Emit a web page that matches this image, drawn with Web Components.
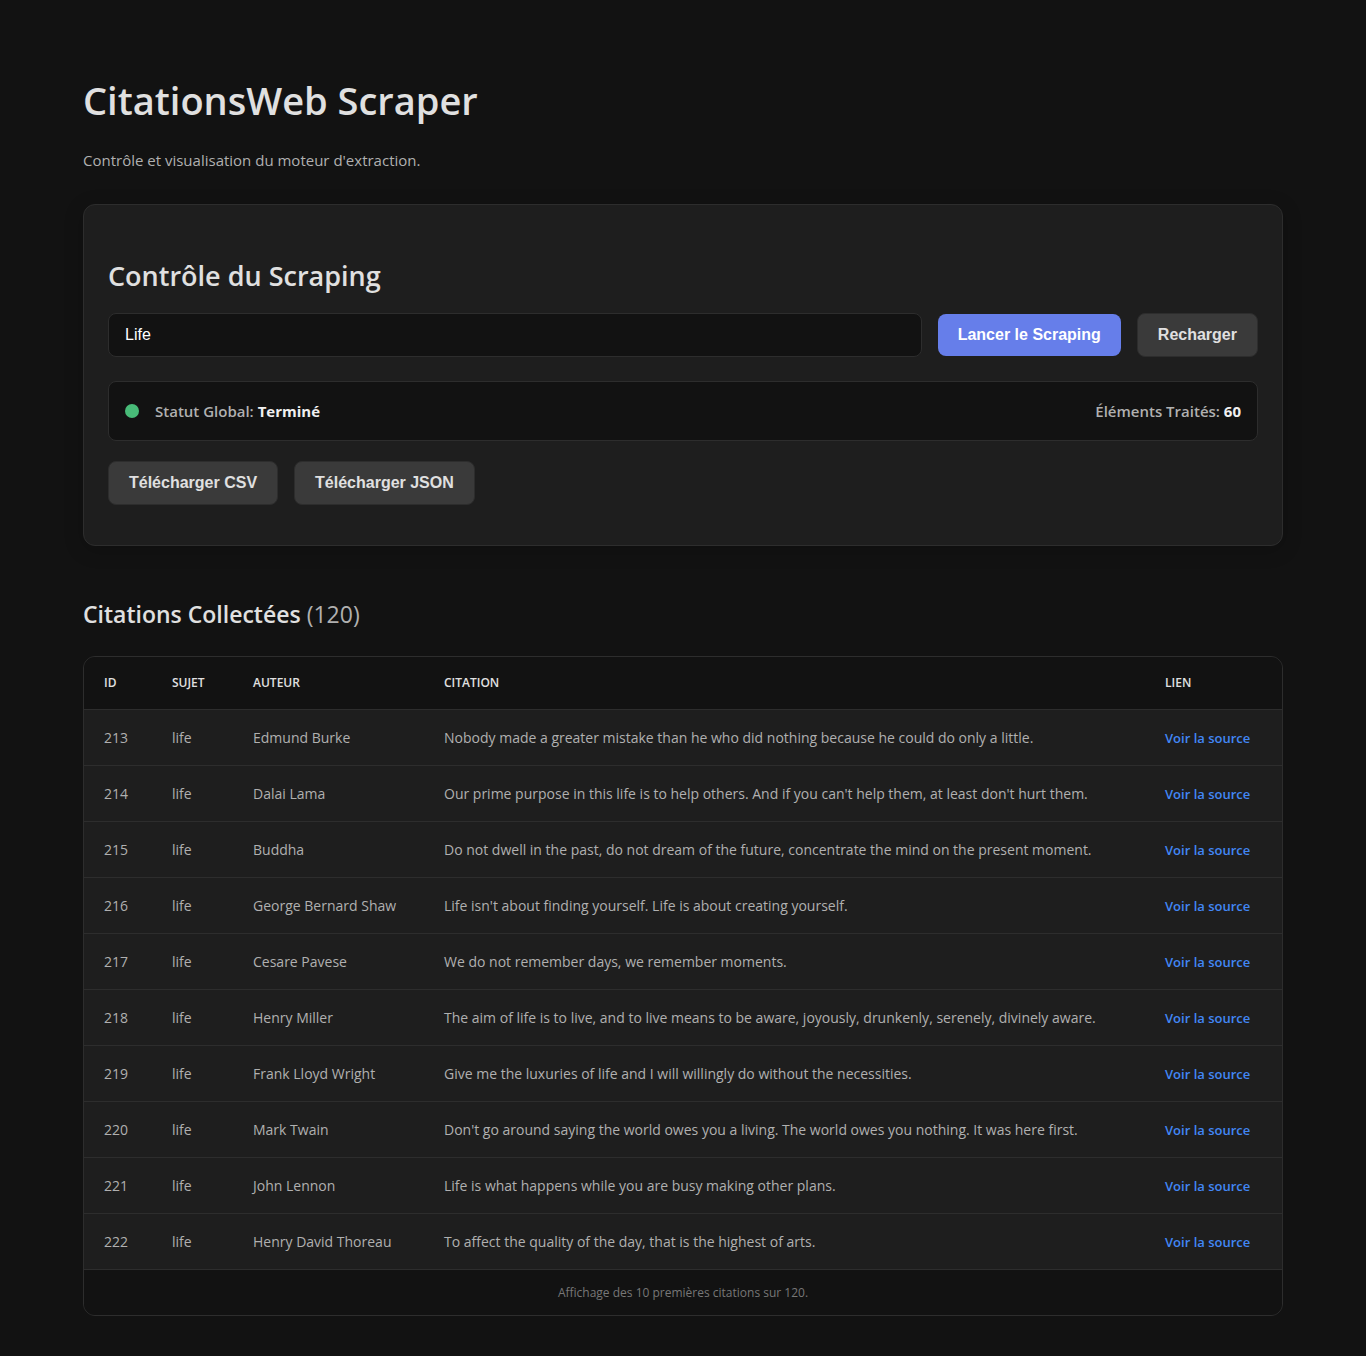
<!DOCTYPE html>
<html lang="fr">
<head>
<meta charset="utf-8">
<meta name="viewport" content="width=device-width, initial-scale=1">
<title>CitationsWeb Scraper</title>
<style>
  :root {
    --bg: #121212;
    --surface: #1e1e1e;
    --border: #2d2d2d;
    --text: #e0e0e0;
    --muted: #b0b0b0;
    --accent: #667eea;
    --link: #4287f5;
    --ok: #48bb78;
  }
  body {
    margin: 0;
    background: var(--bg);
    color: var(--text);
    font-family: "Segoe UI", "Open Sans", "Noto Sans", sans-serif;
    font-size: 15px;
    line-height: 24px;
  }
</style>
</head>
<body>
<scraper-app></scraper-app>

<script>
  class BaseElement extends HTMLElement {
    connectedCallback() {
      if (this.shadowRoot) return;
      this.attachShadow({ mode: "open" }).innerHTML =
        "<style>*{box-sizing:border-box}" + this.styles() + "</style>" + this.markup();
    }
  }

  class PageHeader extends BaseElement {
    styles() {
      return `
        :host { display: block; }
        h1 { margin: 0 0 20px; font-size: 38px; line-height: 56px; font-weight: 600; }
        p { margin: 0; color: var(--muted); }
      `;
    }
    markup() {
      return `<h1><slot name="title"></slot></h1><p><slot></slot></p>`;
    }
  }

  class AppButton extends BaseElement {
    styles() {
      return `
        :host { display: block; flex: none; }
        button {
          display: block; padding: 12px 20px; border: 0; border-radius: 8px;
          font: bold 16px/18px "Liberation Sans", Arial, sans-serif;
          background: var(--accent); color: #fff; cursor: pointer;
        }
        :host([variant="secondary"]) button {
          background: #3a3a3a; color: var(--text); border: 1px solid var(--border);
        }
      `;
    }
    markup() { return `<button type="button"><slot></slot></button>`; }
  }

  class StatusBar extends BaseElement {
    styles() {
      return `
        :host {
          display: flex; align-items: center; justify-content: space-between; gap: 16px;
          min-height: 60px; padding: 8px 16px; box-sizing: border-box;
          background: var(--bg); border: 1px solid var(--border); border-radius: 8px;
          color: var(--muted); font-size: 15px; font-weight: 600;
        }
        .state { display: flex; align-items: center; gap: 16px; }
        .dot { width: 14px; height: 14px; border-radius: 50%; background: var(--ok); }
        strong { color: #f0f0f0; font-weight: 700; }
      `;
    }
    markup() {
      return `
        <div class="state"><span class="dot"></span><span>Statut Global: <strong>${this.getAttribute("state")}</strong></span></div>
        <div class="count">Éléments Traités: <strong>${this.getAttribute("count")}</strong></div>
      `;
    }
  }

  class ControlPanel extends BaseElement {
    styles() {
      return `
        :host {
          display: block; box-sizing: border-box; padding: 51px 24px 40px;
          background: var(--surface); border: 1px solid var(--border); border-radius: 12px;
          box-shadow: 0 4px 20px rgba(0, 0, 0, .2);
        }
        h2 { margin: 0 0 17px; font-size: 27px; line-height: 40px; font-weight: 600; }
        .row { display: flex; align-items: center; gap: 16px; }
        input {
          flex: 1; min-width: 0; height: 44px; padding: 12px 16px;
          background: var(--bg); color: #fff; border: 1px solid var(--border); border-radius: 8px;
          font: 16px/18px "Liberation Sans", Arial, sans-serif;
        }
        status-bar { margin: 24px 0 20px; }
      `;
    }
    markup() {
      return `
        <h2>Contrôle du Scraping</h2>
        <div class="row">
          <input type="text" value="Life" aria-label="Sujet">
          <app-button>Lancer le Scraping</app-button>
          <app-button variant="secondary">Recharger</app-button>
        </div>
        <status-bar state="Terminé" count="60"></status-bar>
        <div class="row">
          <app-button variant="secondary">Télécharger CSV</app-button>
          <app-button variant="secondary">Télécharger JSON</app-button>
        </div>
      `;
    }
  }

  const QUOTES = [
    [213, "life", "Edmund Burke", "Nobody made a greater mistake than he who did nothing because he could do only a little."],
    [214, "life", "Dalai Lama", "Our prime purpose in this life is to help others. And if you can't help them, at least don't hurt them."],
    [215, "life", "Buddha", "Do not dwell in the past, do not dream of the future, concentrate the mind on the present moment."],
    [216, "life", "George Bernard Shaw", "Life isn't about finding yourself. Life is about creating yourself."],
    [217, "life", "Cesare Pavese", "We do not remember days, we remember moments."],
    [218, "life", "Henry Miller", "The aim of life is to live, and to live means to be aware, joyously, drunkenly, serenely, divinely aware."],
    [219, "life", "Frank Lloyd Wright", "Give me the luxuries of life and I will willingly do without the necessities."],
    [220, "life", "Mark Twain", "Don't go around saying the world owes you a living. The world owes you nothing. It was here first."],
    [221, "life", "John Lennon", "Life is what happens while you are busy making other plans."],
    [222, "life", "Henry David Thoreau", "To affect the quality of the day, that is the highest of arts."]
  ];

  class QuoteTable extends BaseElement {
    styles() {
      return `
        :host {
          display: block; overflow: hidden; box-sizing: border-box;
          background: var(--surface); border: 1px solid var(--border); border-radius: 12px;
        }
        table { width: 100%; table-layout: fixed; border-collapse: separate; border-spacing: 0; }
        .id { width: 68px; } .subject { width: 81px; } .author { width: 191px; } .link { width: 137px; }
        th, td { text-align: left; border-bottom: 1px solid var(--border); }
        th { padding: 14px 20px; background: var(--bg); font-size: 12px; font-weight: 600; text-transform: uppercase; }
        td { padding: 16px 20px 15px; color: var(--muted); font-size: 14px; }
        td:last-child { font-size: 13px; }
        a { color: var(--link); font-weight: 600; text-decoration: none; }
        .note { padding: 11px 20px 10px; background: var(--bg); color: #777; font-size: 12px; text-align: center; }
      `;
    }
    markup() {
      const rows = QUOTES.map(([id, subject, author, text]) =>
        `<tr><td>${id}</td><td>${subject}</td><td>${author}</td><td>${text}</td><td><a href="#${id}">Voir la source</a></td></tr>`
      ).join("");
      return `
        <table>
          <colgroup><col class="id"><col class="subject"><col class="author"><col><col class="link"></colgroup>
          <thead><tr><th>ID</th><th>Sujet</th><th>Auteur</th><th>Citation</th><th>Lien</th></tr></thead>
          <tbody>${rows}</tbody>
        </table>
        <div class="note">Affichage des 10 premières citations sur 120.</div>
      `;
    }
  }

  class ScraperApp extends BaseElement {
    styles() {
      return `
        :host { display: block; padding: 72px 40px 40px; }
        main { max-width: 1200px; margin: 0 auto; }
        control-panel { margin: 32px 0 48px; }
        h2 { margin: 0 0 22px; font-size: 23px; line-height: 40px; font-weight: 600; }
        h2 span { color: var(--muted); font-weight: 400; }
      `;
    }
    markup() {
      return `
        <main>
          <page-header><span slot="title">CitationsWeb Scraper</span>Contrôle et visualisation du moteur d'extraction.</page-header>
          <control-panel></control-panel>
          <h2>Citations Collectées <span>(120)</span></h2>
          <quote-table></quote-table>
        </main>
      `;
    }
  }

  customElements.define("page-header", PageHeader);
  customElements.define("app-button", AppButton);
  customElements.define("status-bar", StatusBar);
  customElements.define("control-panel", ControlPanel);
  customElements.define("quote-table", QuoteTable);
  customElements.define("scraper-app", ScraperApp);
</script>
</body>
</html>
